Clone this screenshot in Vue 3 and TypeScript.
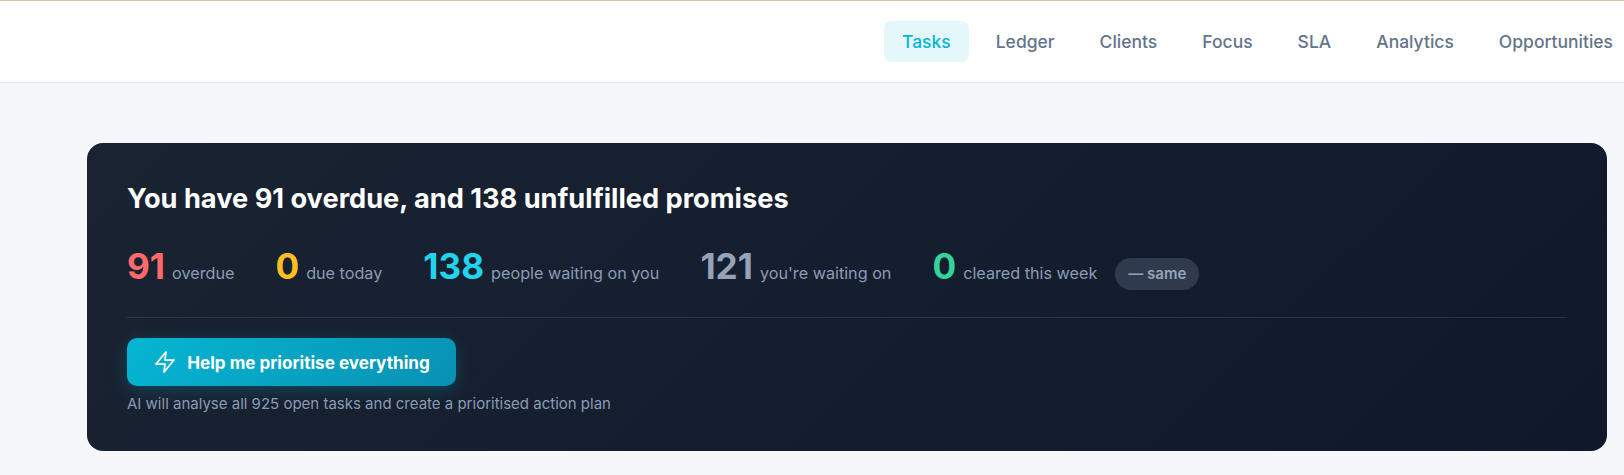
<script setup lang="ts">
interface NavItem { label: string; active?: boolean }
interface Stat { value: string; label: string; tone: string }

const navItems: NavItem[] = [
  { label: 'Tasks', active: true },
  { label: 'Ledger' },
  { label: 'Clients' },
  { label: 'Focus' },
  { label: 'SLA' },
  { label: 'Analytics' },
  { label: 'Opportunities' },
]

const stats: Stat[] = [
  { value: '91', label: 'overdue', tone: 'red' },
  { value: '0', label: 'due today', tone: 'amber' },
  { value: '138', label: 'people waiting on you', tone: 'cyan' },
  { value: '121', label: "you're waiting on", tone: 'slate' },
  { value: '0', label: 'cleared this week', tone: 'green' },
]
</script>

<template>
  <div class="page">
    <header class="topbar">
      <nav class="nav">
        <a v-for="item in navItems" :key="item.label" class="nav-item" :class="{ active: item.active }">{{ item.label }}</a>
      </nav>
    </header>
    <main class="main">
      <section class="card">
        <h1 class="title">You have 91 overdue, and 138 unfulfilled promises</h1>
        <div class="stats">
          <div v-for="s in stats" :key="s.label + s.value" class="stat">
            <span class="value" :class="s.tone">{{ s.value }}</span>
            <span class="label">{{ s.label }}</span>
          </div>
          <span class="badge">— same</span>
        </div>
        <div class="divider"></div>
        <button class="cta" type="button">
          <svg class="bolt" width="24" height="24" viewBox="0 0 24 24" fill="none" stroke="currentColor" stroke-width="1.75" stroke-linecap="round" stroke-linejoin="round">
            <path d="M13 2 3 14h9l-1 8 10-12h-9l1-8z" />
          </svg>
          <span>Help me prioritise everything</span>
        </button>
        <p class="hint">AI will analyse all 925 open tasks and create a prioritised action plan</p>
      </section>
    </main>
  </div>
</template>

<style>
html, body { margin: 0; background: #f5f7fb; }
</style>

<style scoped>
.page {
  height: 475px;
  overflow: hidden;
  background: #f5f7fb;
  font-family: Inter, "Noto Sans", sans-serif;
}
.topbar {
  height: 83px;
  box-sizing: border-box;
  background: #fff;
  border-top: 1px solid #d9c39a;
  border-bottom: 1px solid #e2e8f0;
  overflow: hidden;
}
.nav {
  display: flex;
  align-items: center;
  gap: 9px;
  height: 100%;
  padding-left: 884px;
  width: 800px;
}
.nav-item {
  flex: none;
  padding: 0 18px;
  height: 41px;
  line-height: 41px;
  border-radius: 8px;
  font-size: 17.5px;
  font-weight: 500;
  color: #64748b;
}
.nav-item.active {
  color: #06b6d4;
  background: #e4f7fb;
}
.main {
  padding: 60px 17px 0 87px;
}
.card {
  box-sizing: border-box;
  height: 308px;
  padding: 40px;
  border-radius: 16px;
  background: linear-gradient(135deg, #1a2332 0%, #0f192b 100%);
}
.title {
  margin: 0;
  font-size: 27.2px;
  line-height: 32px;
  font-weight: 700;
  color: #fff;
}
.stats {
  display: flex;
  align-items: baseline;
  margin-top: 29px;
}
.stat {
  display: flex;
  align-items: baseline;
  gap: 7px;
  margin-right: 41px;
}
.stat:nth-last-child(2) { margin-right: 18px; }
.value {
  font-size: 35.2px;
  line-height: 44px;
  font-weight: 700;
}
.label {
  font-size: 16.2px;
  color: #8b9bb4;
}
.red { color: #ff6b6b; }
.amber { color: #fbbf24; }
.cyan { color: #22d3ee; }
.slate { color: #94a3b8; }
.green { color: #34d399; }
.badge {
  padding: 0 13px;
  height: 32px;
  line-height: 32px;
  border-radius: 16px;
  background: #2f3a4c;
  color: #94a3b8;
  font-size: 15px;
  font-weight: 600;
}
.divider {
  height: 1px;
  margin-top: 27px;
  background: rgba(255, 255, 255, 0.1);
}
.cta {
  display: flex;
  align-items: center;
  justify-content: center;
  gap: 10px;
  width: 329px;
  height: 48px;
  margin-top: 20px;
  padding: 0;
  border: 0;
  border-radius: 10px;
  background: linear-gradient(135deg, #06b6d4, #0891b2);
  box-shadow: 0 4px 16px rgba(6, 182, 212, 0.25);
  color: #fff;
  font-family: inherit;
  font-size: 17.1px;
  font-weight: 700;
}
.hint {
  margin: 8px 0 0;
  font-size: 15px;
  line-height: 20px;
  color: #8b9bb4;
}
</style>
